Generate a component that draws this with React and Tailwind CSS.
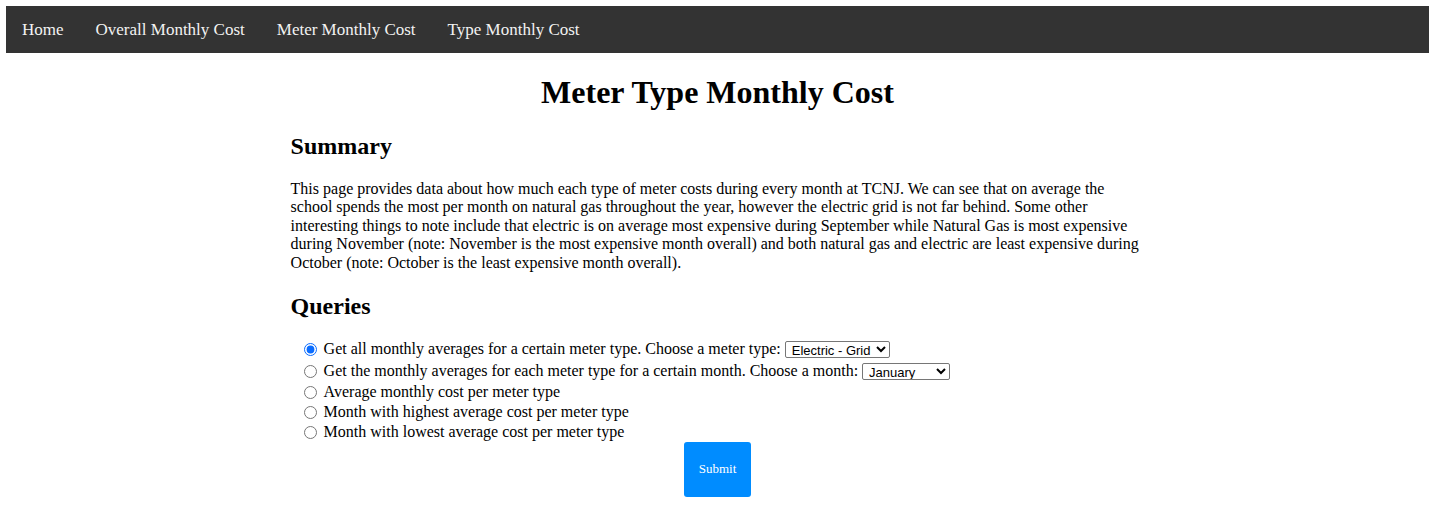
import React, { useState } from "react";

const serif = { fontFamily: '"Liberation Serif", "Times New Roman", serif' };

const navLinks = ["Home", "Overall Monthly Cost", "Meter Monthly Cost", "Type Monthly Cost"];

const months = [
  "January", "February", "March", "April", "May", "June",
  "July", "August", "September", "October", "November", "December",
];

const App = () => {
  const [choice, setChoice] = useState("type");

  return (
    <div className="m-[6px] text-black bg-white" style={serif}>
      {/* top nav */}
      <div className="flex bg-[#333333]">
        {navLinks.map((l) => (
          <a key={l} href="#" className="px-4 py-[14px] text-[17px] leading-[19px] text-[#f2f2f2]">
            {l}
          </a>
        ))}
      </div>

      <h1 className="text-center text-[32px] font-bold leading-[37px] mt-[21px] mb-[21px]">
        Meter Type Monthly Cost
      </h1>

      <div className="w-[60%] mx-auto">
        <h2 className="text-[24px] font-bold leading-[28px] mb-[20px]">Summary</h2>
        <p className="text-[16px] leading-[18.4px]">
          This page provides data about how much each type of meter costs during every month at TCNJ. We can see that on
          average the school spends the most per month on natural gas throughout the year, however the electric grid is
          not far behind. Some other interesting things to note include that electric is on average most expensive during
          September while Natural Gas is most expensive during November (note: November is the most expensive month
          overall) and both natural gas and electric are least expensive during October (note: October is the least
          expensive month overall).
        </p>

        <h2 className="text-[24px] font-bold leading-[28px] mt-[20px] mb-[19px]">Queries</h2>

        <form className="text-[16px] leading-[18.4px] pl-[8px]">
          <div className="flex items-center h-[21px]">
            <input
              type="radio"
              name="q"
              checked={choice === "type"}
              onChange={() => setChoice("type")}
              className="ml-[5px] mr-[7px] w-[13px] h-[13px] accent-[#0a6cff]"
            />
            <span>Get all monthly averages for a certain meter type. Choose a meter type:</span>
            <select className="ml-[4px] h-[17px] text-[13px] leading-[15px] border border-[#767676] rounded-[2px] px-[2px]" style={{ fontFamily: '"Liberation Sans", Arial, sans-serif' }}>
              <option>Electric - Grid</option>
              <option>Natural Gas</option>
            </select>
          </div>
          <div className="flex items-center h-[22px]">
            <input
              type="radio"
              name="q"
              checked={choice === "month"}
              onChange={() => setChoice("month")}
              className="ml-[5px] mr-[7px] w-[13px] h-[13px]"
            />
            <span>Get the monthly averages for each meter type for a certain month. Choose a month:</span>
            <select className="ml-[4px] w-[88px] h-[17px] text-[13px] leading-[15px] border border-[#767676] rounded-[2px] px-[2px]" style={{ fontFamily: '"Liberation Sans", Arial, sans-serif' }}>
              {months.map((m) => (
                <option key={m}>{m}</option>
              ))}
            </select>
          </div>
          {[
            ["avg", "Average monthly cost per meter type"],
            ["high", "Month with highest average cost per meter type"],
            ["low", "Month with lowest average cost per meter type"],
          ].map(([k, label]) => (
            <div key={k} className="flex items-center h-[20px]">
              <input
                type="radio"
                name="q"
                checked={choice === k}
                onChange={() => setChoice(k)}
                className="ml-[5px] mr-[7px] w-[13px] h-[13px]"
              />
              <span>{label}</span>
            </div>
          ))}
          <div className="flex justify-center -ml-[8px]">
            <button
              type="button"
              className="w-[67px] h-[55px] bg-[#008cff] text-white text-[13px] rounded-[3px]"
              style={serif}
            >
              Submit
            </button>
          </div>
        </form>
      </div>
    </div>
  );
};

export default App;
